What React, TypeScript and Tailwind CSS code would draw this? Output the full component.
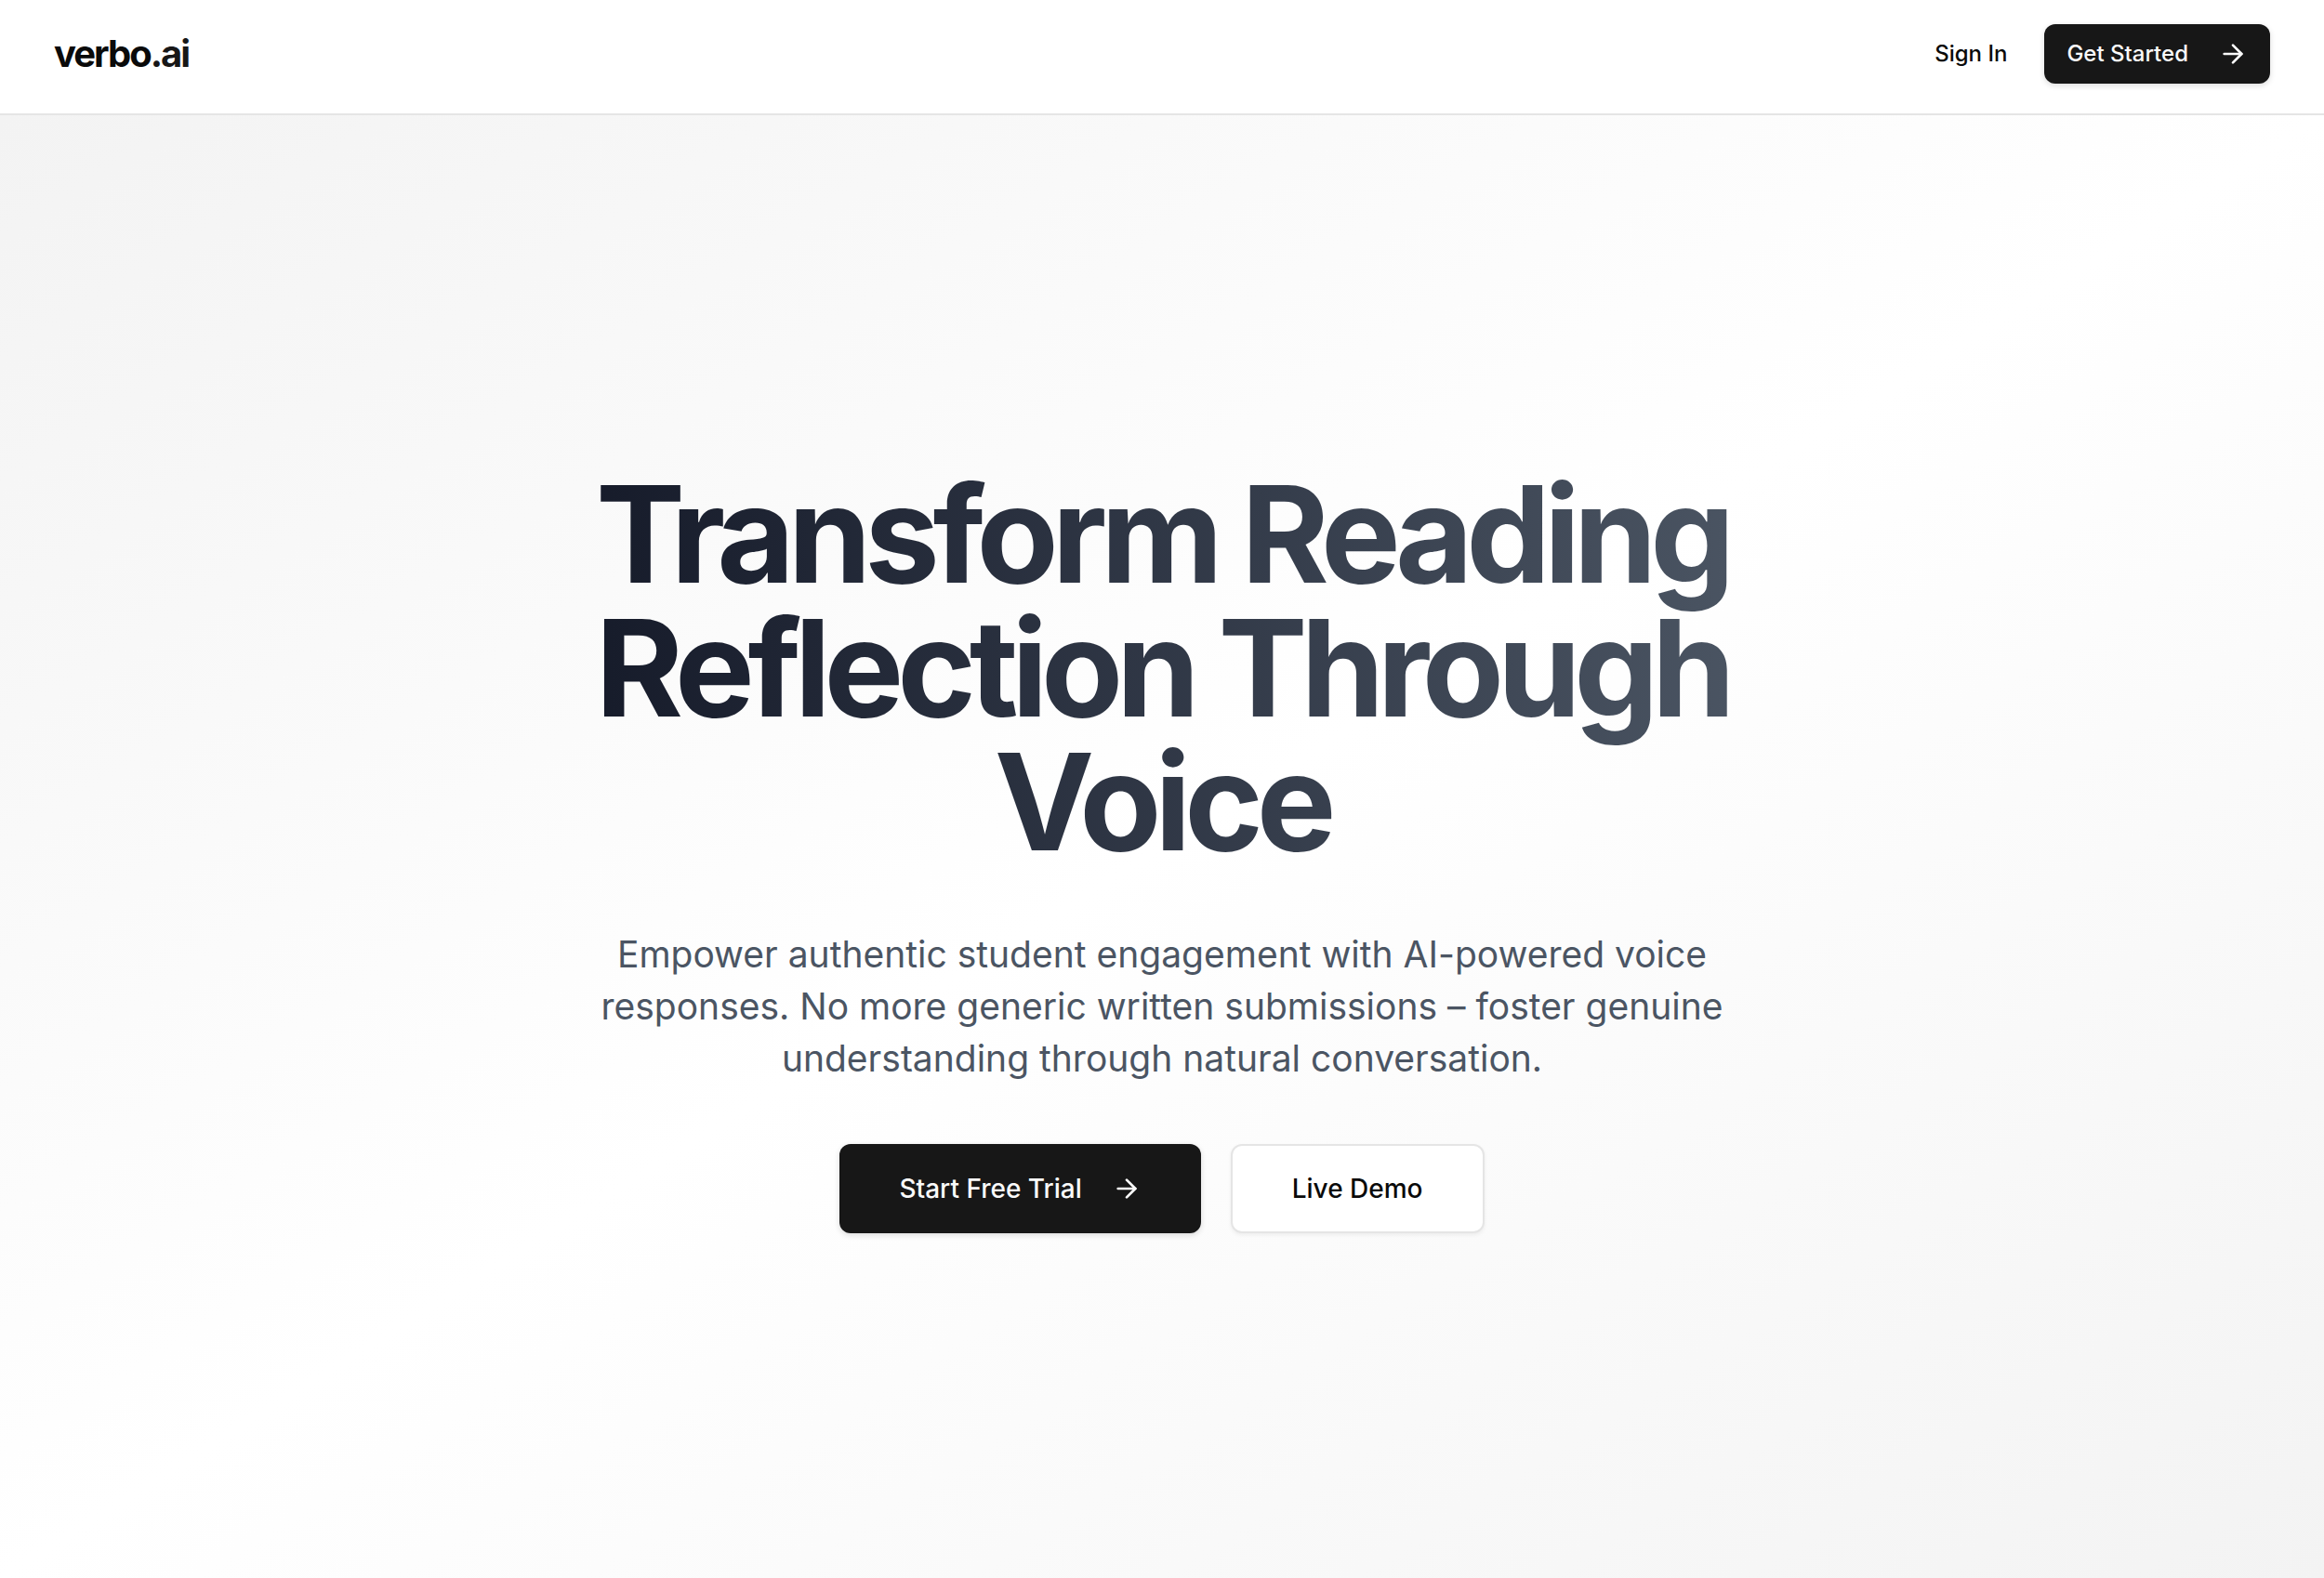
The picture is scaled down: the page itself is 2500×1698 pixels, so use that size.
import { ArrowRight } from "lucide-react";

const dark =
  "inline-flex items-center bg-neutral-900 font-medium text-neutral-50 shadow-[0_2px_6px_rgba(0,0,0,0.14)]";

export default function App() {
  return (
    <div className="flex min-h-screen flex-col bg-white font-['Inter','Liberation_Sans',sans-serif] text-neutral-950 antialiased">
      <header className="flex items-start justify-between border-b-2 border-[#e5e5e5] px-[58px] pt-[26px] pb-8">
        <a href="#" className="flex h-16 items-center text-[40px] leading-none font-bold tracking-tighter">
          <span>
            verbo<span className="text-neutral-900">.ai</span>
          </span>
        </a>
        <nav className="flex items-center gap-4">
          <a href="#signin" className="inline-flex h-16 items-center px-6 text-2xl font-medium">
            Sign In
          </a>
          <button type="button" className={`${dark} h-16 gap-8 rounded-xl px-6 text-2xl`}>
            Get Started
            <ArrowRight size={32} aria-hidden="true" />
          </button>
        </nav>
      </header>

      <main className="flex flex-1 flex-col items-center justify-center bg-linear-to-br from-[#f3f3f3] via-white to-[#f3f3f3] px-8 pt-2">
        <h1 className="max-w-7xl bg-linear-[90deg] from-[#151a29] to-[#4b5563] bg-clip-text text-center text-[144px] leading-none font-bold tracking-tighter text-transparent">
          Transform Reading Reflection Through Voice
        </h1>
        <p className="mt-16 max-w-7xl text-center text-[39px] leading-14 text-[#4b5563]">
          Empower authentic student engagement with AI-powered voice responses. No more generic
          written submissions – foster genuine understanding through natural conversation.
        </p>
        <div className="mt-16 flex gap-8">
          <button type="button" className={`${dark} h-24 gap-8 rounded-xl px-16 text-[28px]`}>
            Start Free Trial
            <ArrowRight size={32} aria-hidden="true" />
          </button>
          <button
            type="button"
            className="inline-flex h-24 items-center rounded-xl border-2 border-[#e5e5e5] bg-white px-16 text-[28px] font-medium shadow-[0_2px_4px_rgba(0,0,0,0.06)]"
          >
            Live Demo
          </button>
        </div>
      </main>
    </div>
  );
}
